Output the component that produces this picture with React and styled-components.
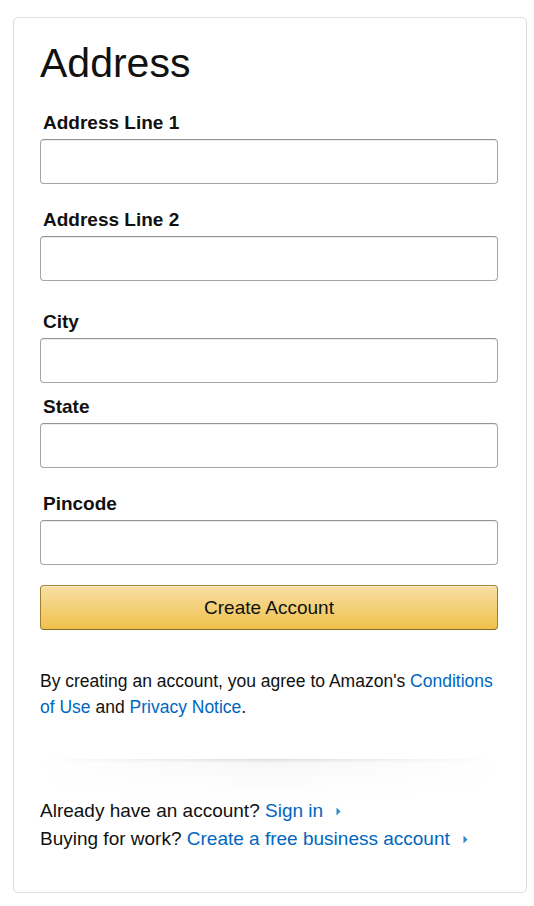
import React from "react";
import styled, { createGlobalStyle } from "styled-components";

const GlobalStyle = createGlobalStyle`
  html, body { margin: 0; padding: 0; background: #fff; }
  body { font-family: "Liberation Sans", Arial, sans-serif; color: #111; }
  * { box-sizing: border-box; }
`;

const Page = styled.div`
  padding: 17px 0 13px 13px;
`;

const Card = styled.div`
  width: 514px;
  border: 1px solid #ddd;
  border-radius: 5px;
  padding: 21px 28px 39px 26px;
  display: flex;
  flex-direction: column;
`;

const Heading = styled.h1`
  margin: 0;
  font-size: 41px;
  line-height: 48px;
  font-weight: 400;
  color: #111;
`;

const Field = styled.div`
  display: flex;
  flex-direction: column;
  margin-top: ${(p) => p.$gap}px;
`;

const Label = styled.label`
  display: block;
  font-size: 19px;
  line-height: 22px;
  font-weight: 700;
  padding-left: 3px;
  margin-bottom: 5px;
  color: #111;
`;

const Input = styled.input`
  display: block;
  width: 100%;
  height: 45px;
  border: 1px solid #a6a6a6;
  border-top-color: #949494;
  border-radius: 4px;
  background: #fff;
  box-shadow: 0 1px 0 rgba(255, 255, 255, 0.5), 0 1px 0 rgba(0, 0, 0, 0.07) inset;
  padding: 4px 10px;
  font-family: inherit;
  font-size: 17.5px;
  outline: none;
`;

const Button = styled.button`
  margin-top: 20px;
  width: 100%;
  height: 45px;
  border: 1px solid;
  border-color: #a88734 #9c7e31 #846a29;
  border-radius: 4px;
  background: linear-gradient(to bottom, #f7dfa5, #f0c14b);
  box-shadow: 0 1px 0 rgba(255, 255, 255, 0.4) inset;
  font-family: inherit;
  font-size: 19px;
  color: #111;
  cursor: pointer;
`;

const Terms = styled.p`
  margin: 39px 0 0;
  font-size: 17.5px;
  line-height: 25.6px;
  color: #111;
`;

const Link = styled.a`
  color: #0066c0;
  text-decoration: none;
`;

const Divider = styled.div`
  margin-top: 39px;
  height: 38px;
  background:
    linear-gradient(to right, #fff, rgba(255, 255, 255, 0), #fff),
    linear-gradient(to bottom, rgba(0, 0, 0, 0.14), rgba(0, 0, 0, 0.03) 4px, rgba(0, 0, 0, 0));
`;

const InfoLine = styled.div`
  font-size: 19px;
  line-height: 28px;
  color: #111;
  white-space: nowrap;
`;

const Arrow = styled.svg`
  display: inline-block;
  width: 5px;
  height: 9px;
  margin-left: 13px;
  vertical-align: 1px;
`;

const ArrowIcon = () => (
  <Arrow viewBox="0 0 5 9" aria-hidden="true">
    <path d="M0.5 0.5 L4.5 4.5 L0.5 8.5 Z" fill="#2f8bc4" />
  </Arrow>
);

const fields = [
  { label: "Address Line 1", gap: 25 },
  { label: "Address Line 2", gap: 25 },
  { label: "City", gap: 30 },
  { label: "State", gap: 13 },
  { label: "Pincode", gap: 25 },
];

export default function App() {
  return (
    <>
      <GlobalStyle />
      <Page>
        <Card>
          <Heading>Address</Heading>
          {fields.map((f) => (
            <Field key={f.label} $gap={f.gap}>
              <Label>{f.label}</Label>
              <Input type="text" />
            </Field>
          ))}
          <Button type="button">Create Account</Button>
          <Terms>
            By creating an account, you agree to Amazon's{" "}
            <Link href="#">Conditions of Use</Link> and{" "}
            <Link href="#">Privacy Notice</Link>.
          </Terms>
          <Divider />
          <InfoLine>
            Already have an account?{" "}
            <Link href="#">
              Sign in
              <ArrowIcon />
            </Link>
          </InfoLine>
          <InfoLine>
            Buying for work?{" "}
            <Link href="#">
              Create a free business account
              <ArrowIcon />
            </Link>
          </InfoLine>
        </Card>
      </Page>
    </>
  );
}
